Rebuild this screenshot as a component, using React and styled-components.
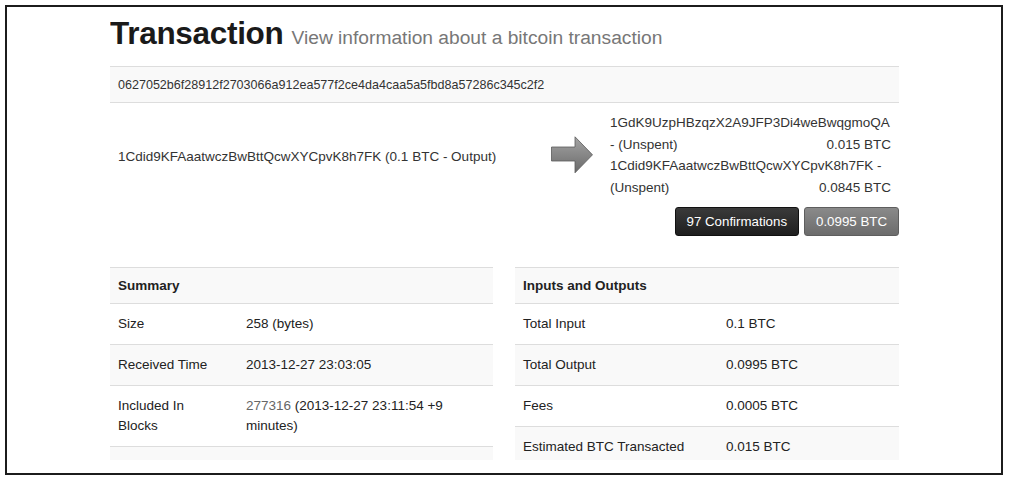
import React from 'react';
import styled, { createGlobalStyle } from 'styled-components';

const GlobalStyle = createGlobalStyle`
  html, body {
    margin: 0;
    padding: 0;
    background: #fff;
  }
  body {
    font-family: "Liberation Sans", Arial, sans-serif;
    color: #333;
  }
`;

const Frame = styled.div`
  box-sizing: border-box;
  margin: 5px 0 0 5px;
  width: 998px;
  height: 470px;
  border: 2px solid #1c1c1c;
  padding-left: 103px;
  overflow: hidden;
`;

const Page = styled.div`
  width: 789px;
  height: 453px;
  overflow: hidden;
`;

const Header = styled.div`
  display: flex;
  align-items: baseline;
  gap: 8px;
  margin-top: 8px;
  height: 36px;
  line-height: 36px;
`;

const Title = styled.h1`
  margin: 0;
  font-size: 31.5px;
  font-weight: bold;
  color: #1a1a1a;
  letter-spacing: -0.3px;
`;

const Subtitle = styled.span`
  font-size: 19.2px;
  color: #777;
`;

const HashBar = styled.div`
  box-sizing: border-box;
  margin-top: 15px;
  height: 37px;
  display: flex;
  align-items: center;
  padding: 0 8px;
  background: #f9f9f9;
  border-top: 1px solid #ddd;
  border-bottom: 1px solid #ddd;
  font-size: 12.55px;
  color: #333;
`;

const IOGrid = styled.div`
  display: grid;
  grid-template-columns: 433px 58px 298px;
  align-items: center;
  padding: 9px 0 8px;
  font-size: 13.5px;
`;

const InputCell = styled.div`
  padding: 3px 8px 0;
`;

const ArrowCell = styled.div`
  display: flex;
  justify-content: center;
`;

const Outputs = styled.div`
  padding: 0 8px 0 9px;
  line-height: 21.7px;
  white-space: nowrap;
`;

const OutLine = styled.div`
  display: flex;
  justify-content: space-between;
`;

const ButtonRow = styled.div`
  display: flex;
  justify-content: flex-end;
  gap: 5px;
`;

const Badge = styled.div`
  box-sizing: border-box;
  height: 29px;
  padding: 0 11px;
  display: flex;
  align-items: center;
  border-radius: 3px;
  font-size: 13.3px;
  color: #fff;
  background: ${(p) => (p.$dark
    ? 'linear-gradient(#3a3a3a, #1f1f1f)'
    : 'linear-gradient(#8a8a8a, #6c6c6c)')};
  border: 1px solid ${(p) => (p.$dark ? '#111' : '#5e5e5e')};
`;

const Tables = styled.div`
  display: grid;
  grid-template-columns: 383px 384px;
  gap: 22px;
  align-items: start;
  margin-top: 31px;
`;

const Table = styled.table`
  width: 100%;
  table-layout: fixed;
  border-collapse: collapse;
  font-size: 13.5px;
`;

const HeadCell = styled.th`
  text-align: left;
  padding: 8px 8px 7px;
  line-height: 20px;
  font-weight: bold;
  color: #222;
  background: #f9f9f9;
  border-top: 1px solid #ddd;
`;

const Row = styled.tr`
  background: ${(p) => (p.$striped ? '#f9f9f9' : '#fff')};
`;

const Cell = styled.td`
  padding: 10px 8px;
  line-height: 20px;
  vertical-align: top;
  border-top: 1px solid #ddd;
  color: #222;
`;

const Link = styled.span`
  color: #666;
`;

const Arrow = () => (
  <svg width="42" height="38" viewBox="0 0 42 38">
    <defs>
      <linearGradient id="ag" x1="0" y1="0" x2="0" y2="1">
        <stop offset="0" stopColor="#a4a4a4" />
        <stop offset="1" stopColor="#6a6a6a" />
      </linearGradient>
    </defs>
    <polygon
      points="0.5,11 24,11 24,0.8 41.5,18.8 24,36.8 24,25 0.5,25"
      fill="url(#ag)"
      stroke="#5a5a5a"
      strokeWidth="0.8"
    />
  </svg>
);

const summary = [
  ['Size', '258 (bytes)'],
  ['Received Time', '2013-12-27 23:03:05'],
  [
    <>
      Included In
      <br />
      Blocks
    </>,
    <>
      <Link>277316</Link> (2013-12-27 23:11:54 +9 minutes)
    </>,
  ],
  ['\u00a0', ''],
];

const totals = [
  ['Total Input', '0.1 BTC'],
  ['Total Output', '0.0995 BTC'],
  ['Fees', '0.0005 BTC'],
  ['Estimated BTC Transacted', '0.015 BTC'],
];

const InfoTable = ({ title, rows, labelWidth }) => (
  <Table>
    <colgroup>
      <col style={{ width: labelWidth }} />
      <col />
    </colgroup>
    <thead>
      <tr>
        <HeadCell colSpan={2}>{title}</HeadCell>
      </tr>
    </thead>
    <tbody>
      {rows.map(([label, value], i) => (
        <Row key={i} $striped={i % 2 === 1}>
          <Cell>{label}</Cell>
          <Cell>{value}</Cell>
        </Row>
      ))}
    </tbody>
  </Table>
);

export default function App() {
  return (
    <>
      <GlobalStyle />
      <Frame>
        <Page>
          <Header>
            <Title>Transaction</Title>
            <Subtitle>View information about a bitcoin transaction</Subtitle>
          </Header>
          <HashBar>0627052b6f28912f2703066a912ea577f2ce4da4caa5a5fbd8a57286c345c2f2</HashBar>
          <IOGrid>
            <InputCell>1Cdid9KFAaatwczBwBttQcwXYCpvK8h7FK (0.1 BTC - Output)</InputCell>
            <ArrowCell>
              <Arrow />
            </ArrowCell>
            <Outputs>
              <div>1GdK9UzpHBzqzX2A9JFP3Di4weBwqgmoQA</div>
              <OutLine>
                <span>- (Unspent)</span>
                <span>0.015 BTC</span>
              </OutLine>
              <div>1Cdid9KFAaatwczBwBttQcwXYCpvK8h7FK -</div>
              <OutLine>
                <span>(Unspent)</span>
                <span>0.0845 BTC</span>
              </OutLine>
            </Outputs>
          </IOGrid>
          <ButtonRow>
            <Badge $dark>97 Confirmations</Badge>
            <Badge>0.0995 BTC</Badge>
          </ButtonRow>
          <Tables>
            <InfoTable title="Summary" rows={summary} labelWidth="128px" />
            <InfoTable title="Inputs and Outputs" rows={totals} labelWidth="203px" />
          </Tables>
        </Page>
      </Frame>
    </>
  );
}
